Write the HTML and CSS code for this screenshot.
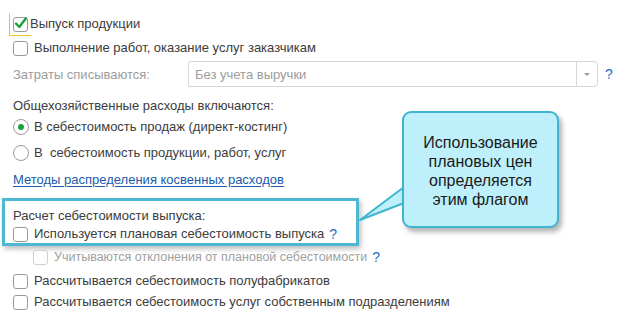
FILE: index.html
```html
<!DOCTYPE html>
<html lang="ru">
<head>
<meta charset="utf-8">
<link rel="stylesheet" href="styles.css">
</head>
<body>
<div class="page">
  <div class="row r1">
    <span class="focus"><span class="cb checked"><svg viewBox="0 0 15 15" width="15" height="15"><path d="M3 7.5 L6.3 11 L12.8 2.5" fill="none" stroke="#1aa03c" stroke-width="2.4" stroke-linecap="round" stroke-linejoin="round"/></svg></span></span>
    <span class="lbl">Выпуск продукции</span>
  </div>
  <div class="row r2">
    <span class="cb"></span>
    <span class="lbl">Выполнение работ, оказание услуг заказчикам</span>
  </div>
  <div class="row r3">
    <span class="field-lbl">Затраты списываются:</span>
    <div class="select">
      <span class="sel-text">Без учета выручки</span>
      <span class="sel-btn"><span class="arrow"></span></span>
    </div>
    <span class="help">?</span>
  </div>
  <div class="row r4">
    <span class="lbl">Общехозяйственные расходы включаются:</span>
  </div>
  <div class="row r5">
    <span class="radio on"><span class="dot"></span></span>
    <span class="lbl">В себестоимость продаж (директ-костинг)</span>
  </div>
  <div class="row r6">
    <span class="radio"></span>
    <span class="lbl">В&nbsp; себестоимость продукции, работ, услуг</span>
  </div>
  <div class="row r7">
    <a class="link">Методы распределения косвенных расходов</a>
  </div>
  <div class="hl">
    <div class="row r8"><span class="lbl">Расчет себестоимости выпуска:</span></div>
    <div class="row r9">
      <span class="cb"></span>
      <span class="lbl">Используется плановая себестоимость выпуска</span>
      <span class="help small">?</span>
    </div>
  </div>
  <div class="row r10">
    <span class="cb disabled"></span>
    <span class="lbl dis">Учитываются отклонения от плановой себестоимости</span>
    <span class="help small">?</span>
  </div>
  <div class="row r11">
    <span class="cb"></span>
    <span class="lbl">Рассчитывается себестоимость полуфабрикатов</span>
  </div>
  <div class="row r12">
    <span class="cb"></span>
    <span class="lbl">Рассчитывается себестоимость услуг собственным подразделениям</span>
  </div>

  <svg class="tail" width="70" height="50" viewBox="0 0 70 50">
    <polygon points="48,2 4,35 48,18" fill="#bdf0fb" stroke="#3fb6cf" stroke-width="2" stroke-linejoin="round"/>
  </svg>
  <div class="callout">Использование плановых цен определяется этим флагом</div>
</div>
</body>
</html>
```
FILE: styles.css
```css
* { box-sizing: border-box; }
html, body { margin: 0; padding: 0; background: #fff; }
body {
  font-family: Arial, "Liberation Sans", sans-serif;
  font-size: 13px;
  color: #3c3c3c;
  width: 637px;
  height: 323px;
  overflow: hidden;
}
.page {
  position: relative;
  padding: 16px 0 0 13px;
  width: 637px;
  height: 323px;
}
.row {
  display: flex;
  align-items: center;
  height: 16px;
  white-space: nowrap;
}
.lbl { line-height: 16px; }
.cb {
  display: inline-block;
  flex: none;
  width: 15px;
  height: 15px;
  border: 1px solid #9a9a9a;
  border-radius: 3px;
  background: #fff;
  margin-right: 6px;
  position: relative;
}
.cb svg { position: absolute; left: -1px; top: -2px; }
.cb.disabled { border-color: #d0d0d0; }
.focus {
  display: inline-flex;
  flex: none;
  margin: -4px -2px -4px -4px;
  padding: 3px;
  border: 1px solid #f0c020;
  border-top-color: transparent;
  border-right-color: transparent;
}
.focus .cb { margin-right: 0; }
.r2 { margin-top: 8px; }
.r3 { margin-top: 5px; height: 26px; }
.field-lbl { color: #9c9c9c; width: 175px; flex: none; }
.select {
  width: 410px;
  height: 26px;
  border: 1px solid #d6d6d6;
  border-radius: 2px 4px 4px 2px;
  display: flex;
  align-items: center;
  flex: none;
}
.sel-text { flex: 1; padding-left: 6px; color: #9c9c9c; }
.sel-btn {
  width: 21px;
  height: 24px;
  border-left: 1px solid #d6d6d6;
  display: flex;
  align-items: center;
  justify-content: center;
}
.arrow {
  width: 0; height: 0;
  border-left: 3px solid transparent;
  border-right: 3px solid transparent;
  border-top: 3px solid #9c9c9c;
}
.help {
  color: #1a6fc0;
  margin-left: 7px;
  font-size: 14px;
}
.help.small { margin-left: 5px; }
.r4 { margin-top: 11px; }
.r5 { margin-top: 5px; }
.r6 { margin-top: 10px; }
.radio {
  display: inline-block;
  flex: none;
  width: 16px;
  height: 16px;
  border: 1px solid #9a9a9a;
  border-radius: 50%;
  margin-right: 5px;
  position: relative;
  background: #fff;
}
.radio .dot {
  position: absolute;
  left: 4px; top: 4px;
  width: 6px; height: 6px;
  border-radius: 50%;
  background: #1aa03c;
}
.r7 { margin-top: 10px; }
.link {
  color: #1a5aac;
  text-decoration: underline;
  text-underline-offset: 2px;
}
.hl {
  margin: 11px 0 0 -11px;
  width: 357px;
  border: 3px solid #4cb8d2;
  padding: 7px 0 1px 8px;
  box-shadow: 2px 3px 5px rgba(0,0,0,0.25);
}
.r9 { margin-top: 2px; }
.r10 { margin-top: 3px; padding-left: 20px; }
.lbl.dis { color: #a0a0a0; font-size: 12.5px; }
.r11 { margin-top: 8px; }
.r12 { margin-top: 5px; }

.callout {
  position: absolute;
  left: 402px;
  top: 111px;
  width: 157px;
  height: 117px;
  background: #bdf0fb;
  border: 2px solid #3fb6cf;
  border-radius: 9px;
  box-shadow: 3px 4px 5px rgba(0,0,0,0.3);
  color: #1a1a1a;
  font-size: 16px;
  line-height: 19px;
  text-align: center;
  padding: 20px 12px 0 12px;
}
.tail {
  position: absolute;
  left: 356px;
  top: 185px;
}
```
